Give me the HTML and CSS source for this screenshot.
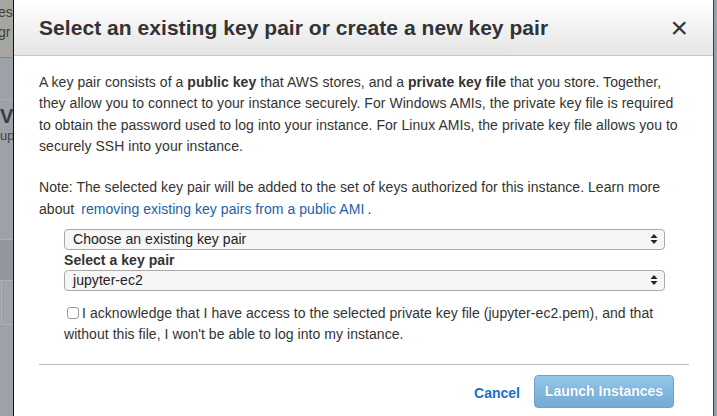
FILE: index.html
```html
<!DOCTYPE html>
<html>
<head>
<meta charset="utf-8">
<link rel="stylesheet" href="styles.css">
</head>
<body>
<div class="page">
  <div class="bg-left">
    <div class="bg-head"><span>es</span><span>gr</span></div>
    <div class="bg-band"></div>
    <div class="bg-title"><b>V</b><span>up</span></div>
    <div class="bg-gap"></div>
    <div class="bg-row1"></div>
    <div class="bg-row2"></div>
    <div class="bg-rest"></div>
  </div>
  <div class="modal">
    <div class="modal-header">
      <h1 class="modal-title">Select an existing key pair or create a new key pair</h1>
      <span class="close">×</span>
    </div>
    <div class="modal-body">
      <p class="para">A key pair consists of a <b>public key</b> that AWS stores, and a <b>private key file</b> that you store. Together, they allow you to connect to your instance securely. For Windows AMIs, the private key file is required to obtain the password used to log into your instance. For Linux AMIs, the private key file allows you to securely SSH into your instance.</p>
      <p class="para">Note: The selected key pair will be added to the set of keys authorized for this instance. Learn more about <a class="link">removing existing key pairs from a public AMI</a>.</p>
      <div class="form">
        <div class="select"><span>Choose an existing key pair</span><svg class="arrows" width="8" height="12" viewBox="0 0 8 12"><path d="M4 1 L7.5 5 L0.5 5 Z M4 11 L7.5 7 L0.5 7 Z" fill="#222"/></svg></div>
        <div class="label">Select a key pair</div>
        <div class="select"><span>jupyter-ec2</span><svg class="arrows" width="8" height="12" viewBox="0 0 8 12"><path d="M4 1 L7.5 5 L0.5 5 Z M4 11 L7.5 7 L0.5 7 Z" fill="#222"/></svg></div>
        <p class="ack"><span class="checkbox"></span>I acknowledge that I have access to the selected private key file (jupyter-ec2.pem), and that without this file, I won't be able to log into my instance.</p>
      </div>
    </div>
    <div class="modal-footer">
      <a class="cancel">Cancel</a>
      <span class="launch">Launch Instances</span>
    </div>
  </div>
  <div class="bg-right"></div>
</div>
</body>
</html>
```

FILE: styles.css
```css
* { box-sizing: border-box; }
html, body { margin: 0; padding: 0; }
body {
  width: 717px;
  height: 416px;
  overflow: hidden;
  font-family: "Liberation Sans", Arial, Helvetica, sans-serif;
  color: #333;
  background: #9da1a8;
}
.page {
  display: flex;
  height: 416px;
}
.bg-left {
  width: 13px;
  flex: none;
  display: flex;
  flex-direction: column;
  overflow: hidden;
  background: #9da1a8;
}
.bg-head {
  height: 58px;
  background: #a5a79f;
  border-bottom: 1px solid #a37d5a;
  display: flex;
  flex-direction: column;
  font-size: 14px;
  line-height: 20px;
  color: #3d3d3d;
  padding-top: 2px;
  margin-left: -2px;
}
.bg-band {
  height: 42px;
  border-bottom: 1px solid #a9acb2;
}
.bg-title {
  display: flex;
  flex-direction: column;
  height: 100px;
  font-size: 20px;
  line-height: 22px;
  color: #3a3c40;
  padding-top: 5px;
}
.bg-title span {
  font-size: 13px;
  line-height: 18px;
  color: #444;
}
.bg-gap { height: 40px; border-bottom: 1px solid #adb0b6; }
.bg-row1 { height: 41px; background: #92969c; border-bottom: 1px solid #adb0b6; }
.bg-row2 { height: 44px; background: #9fa3a9; border-bottom: 1px solid #adb0b6; margin-left: 1px; border-left: 1px solid #adb0b6;}
.bg-rest { flex: 1; }
.bg-right {
  flex: 1;
  background: #9aa0a8;
  border-left: 1px solid #3c3f44;
}
.modal {
  width: 700px;
  flex: none;
  background: #fff;
  border-left: 1px solid #111;
  display: flex;
  flex-direction: column;
}
.modal-header {
  height: 56px;
  background: linear-gradient(#ffffff, #e5e5e5);
  border-bottom: 1px solid #c8c8c8;
  display: flex;
  align-items: center;
  justify-content: space-between;
  padding: 0 24px 0 25px;
}
.modal-title {
  margin: 0;
  font-size: 21px;
  font-weight: bold;
  color: #333;
  letter-spacing: 0.05px;
}
.close {
  font-size: 30px;
  line-height: 30px;
  color: #333;
  font-weight: normal;
  margin-right: 1px;
}
.modal-body {
  padding: 16px 25px 0 25px;
  letter-spacing: 0.05px;
}
.para {
  margin: 0 0 20px 0;
  font-size: 14px;
  line-height: 21.33px;
}
.para:last-of-type { margin-bottom: 9px; }
.link {
  color: #1d5fac;
  margin: 0 3px 0 3px;
}
.form {
  padding-left: 25px;
  padding-right: 23px;
  font-size: 14px;
}
.select {
  height: 21px;
  border: 1px solid #a9a9a9;
  border-radius: 4px;
  background: #f6f6f6;
  display: flex;
  align-items: center;
  justify-content: space-between;
  padding: 0 6px 0 8px;
  line-height: 19px;
  color: #222;
}
.arrows { flex: none; }
.label {
  font-weight: bold;
  line-height: 20px;
  color: #333;
}
.ack {
  margin: 12px 0 0 0;
  line-height: 21px;
  font-size: 14px;
}
.checkbox {
  display: inline-block;
  width: 12px;
  height: 12px;
  border: 1px solid #9a9a9a;
  border-radius: 3px;
  background: #fff;
  vertical-align: -1px;
  margin: 0 3px 0 3px;
}
.modal-footer {
  margin: 19px 24px 0 25px;
  border-top: 1px solid #bdbdbd;
  padding: 10px 15px 0 0;
  display: flex;
  justify-content: flex-end;
  align-items: center;
}
.cancel {
  color: #1a6fc9;
  font-weight: bold;
  font-size: 14px;
  margin-right: 14px;
  padding-top: 3px;
}
.launch {
  width: 140px;
  height: 33px;
  border: 1px solid #6ea2cf;
  border-radius: 4px;
  background: linear-gradient(#94c8ea, #71aad6);
  color: #fff;
  font-weight: bold;
  font-size: 14px;
  display: flex;
  align-items: center;
  justify-content: center;
  text-shadow: 0 0 1px rgba(60,100,140,0.5);
}
```
